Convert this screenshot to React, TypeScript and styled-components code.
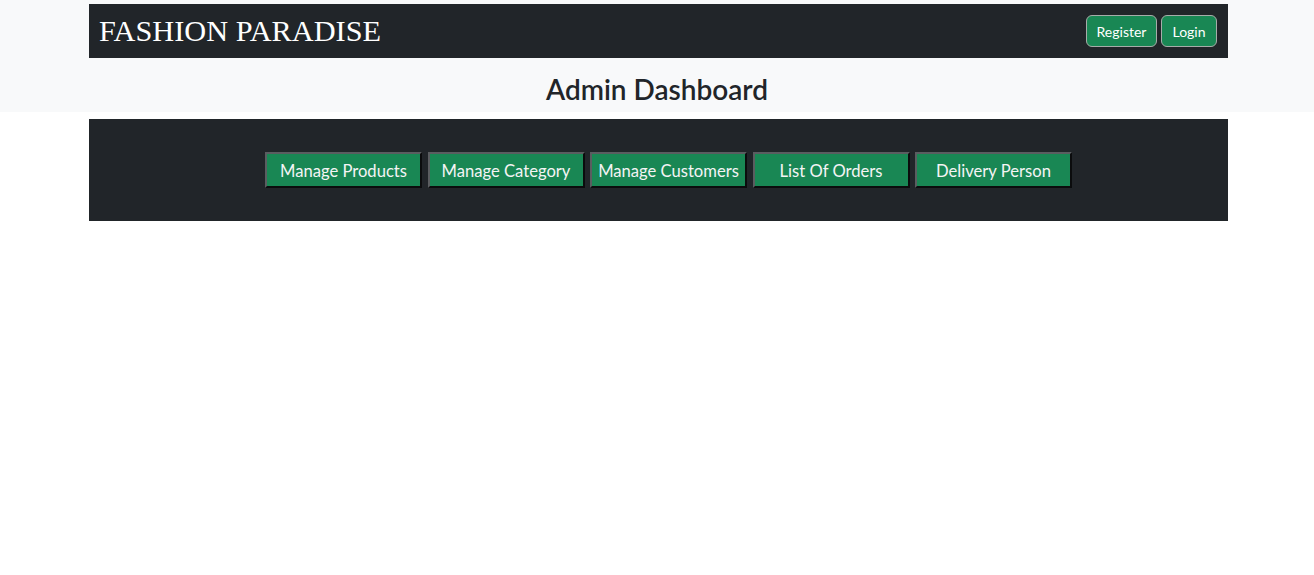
import React from "react";
import styled, { createGlobalStyle } from "styled-components";

const GlobalStyle = createGlobalStyle`
  html, body {
    margin: 0;
    padding: 0;
    background: #ffffff;
    font-family: Lato, "Noto Sans", sans-serif;
    color: #212529;
  }
  * { box-sizing: border-box; }
`;

const TopSection = styled.header`
  background: #f8f9fa;
  padding-top: 4px;
  height: 112px;
`;

const Navbar = styled.nav`
  margin: 0 86px 0 89px;
  height: 54px;
  background: #212529;
  display: flex;
  align-items: center;
  justify-content: space-between;
  padding: 0 11px 0 10px;
`;

const Brand = styled.div`
  font-family: "Liberation Serif", "Times New Roman", serif;
  font-size: 30.3px;
  color: #ffffff;
  line-height: 1;
`;

const AuthGroup = styled.div`
  display: flex;
  gap: 4px;
`;

const AuthButton = styled.button<{ $w: number }>`
  height: 32px;
  width: ${(p) => p.$w}px;
  background: #198754;
  color: #ffffff;
  border: 1px solid #a7aca9;
  border-radius: 6px;
  font-family: Lato, "Noto Sans", sans-serif;
  font-size: 14px;
  padding: 1px 0 0;
  display: flex;
  align-items: center;
  justify-content: center;
`;

const PageTitle = styled.h3`
  margin: 0;
  height: 54px;
  display: flex;
  align-items: center;
  justify-content: center;
  font-family: Lato, "Noto Sans", sans-serif;
  font-size: 28px;
  font-weight: 600;
  color: #212529;
  padding-top: 7px;
`;

const Panel = styled.section`
  margin: 7px 86px 0 89px;
  height: 102px;
  background: #212529;
  display: flex;
  align-items: center;
  justify-content: center;
  gap: 5.5px;
  padding-left: 20px;
`;

const MenuButton = styled.button`
  width: 157px;
  height: 36px;
  background: #198754;
  color: #f4f4f4;
  border-style: solid;
  border-width: 2px;
  border-color: #5a5d60 #0b0c0d #0b0c0d #5a5d60;
  font-family: Lato, "Noto Sans", sans-serif;
  font-size: 16.6px;
  padding: 1px 0 0;
  display: flex;
  align-items: center;
  justify-content: center;
  white-space: nowrap;
`;

const menu = [
  "Manage Products",
  "Manage Category",
  "Manage Customers",
  "List Of Orders",
  "Delivery Person",
];

export default function App() {
  return (
    <>
      <GlobalStyle />
      <TopSection>
        <Navbar>
          <Brand>FASHION PARADISE</Brand>
          <AuthGroup>
            <AuthButton $w={71}>Register</AuthButton>
            <AuthButton $w={56}>Login</AuthButton>
          </AuthGroup>
        </Navbar>
        <PageTitle>Admin Dashboard</PageTitle>
      </TopSection>
      <Panel>
        {menu.map((m) => (
          <MenuButton key={m}>{m}</MenuButton>
        ))}
      </Panel>
    </>
  );
}
